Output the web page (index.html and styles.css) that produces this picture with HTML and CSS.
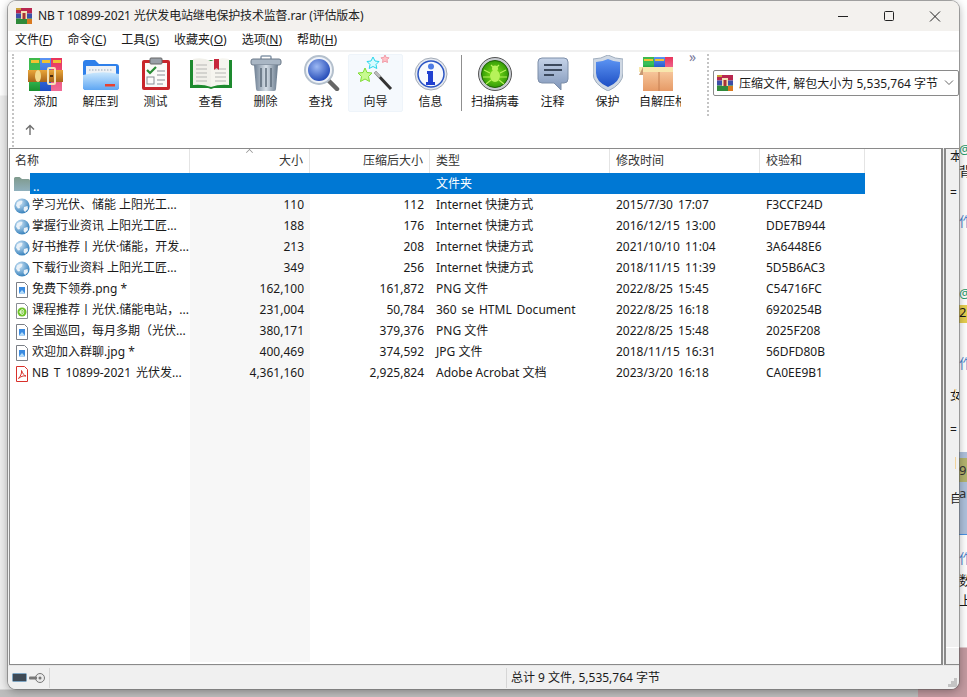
FILE: index.html
```html
<!DOCTYPE html>
<html lang="zh">
<head>
<meta charset="utf-8">
<title>WinRAR</title>
<link rel="stylesheet" href="styles.css">
</head>
<body>
<svg class="defs" width="0" height="0">
  <defs>
    <linearGradient id="gGreen" x1="0" x2="0" y1="0" y2="1"><stop offset="0" stop-color="#3fb84a"/><stop offset=".6" stop-color="#37c05a"/><stop offset="1" stop-color="#1b8f2e"/></linearGradient>
    <linearGradient id="gBlue" x1="0" x2="0" y1="0" y2="1"><stop offset="0" stop-color="#5b93f2"/><stop offset="1" stop-color="#1e4fc4"/></linearGradient>
    <linearGradient id="gRed" x1="0" x2="0" y1="0" y2="1"><stop offset="0" stop-color="#e8345a"/><stop offset="1" stop-color="#f06a96"/></linearGradient>
    <linearGradient id="gBelt" x1="0" x2="0" y1="0" y2="1"><stop offset="0" stop-color="#e9a63a"/><stop offset="1" stop-color="#a8641a"/></linearGradient>
    <linearGradient id="gFolder" x1="0" x2="0" y1="0" y2="1"><stop offset="0" stop-color="#cbe8fd"/><stop offset="1" stop-color="#5ea6f3"/></linearGradient>
    <linearGradient id="gUp" x1="0" x2="0" y1="0" y2="1"><stop offset="0" stop-color="#7f9a8c"/><stop offset="1" stop-color="#8fb0bd"/></linearGradient>
    <linearGradient id="gCan" x1="0" x2="1" y1="0" y2="0"><stop offset="0" stop-color="#6e7f92"/><stop offset=".5" stop-color="#d6dfe8"/><stop offset="1" stop-color="#67788a"/></linearGradient>
    <radialGradient id="gLens" cx=".4" cy=".35" r=".7"><stop offset="0" stop-color="#9db9f4"/><stop offset="1" stop-color="#1f46b4"/></radialGradient>
    <radialGradient id="gBug" cx=".5" cy=".5" r=".55"><stop offset="0" stop-color="#86e61c"/><stop offset="1" stop-color="#2a9405"/></radialGradient>
    <linearGradient id="gNote" x1="0" x2="0" y1="0" y2="1"><stop offset="0" stop-color="#c5d3e8"/><stop offset="1" stop-color="#7f95b8"/></linearGradient>
    <linearGradient id="gBox" x1="0" x2="0" y1="0" y2="1"><stop offset="0" stop-color="#f6c59a"/><stop offset="1" stop-color="#e69a66"/></linearGradient>
    <radialGradient id="gGlobe" cx=".35" cy=".3" r=".8"><stop offset="0" stop-color="#cfe6f7"/><stop offset="1" stop-color="#2374b4"/></radialGradient>
    <symbol id="rar" viewBox="0 0 16 16">
      <rect x="0" y="0" width="16" height="5.500" fill="#b8274f"/><rect x="0" y="5.500" width="16" height="5" fill="#3d4fa8"/><rect x="0" y="10.500" width="16" height="5.500" fill="#2f8a3a"/>
      <rect x="0" y="0" width="5" height="2" fill="#c9a23a"/><path d="M5 5.500h6M5 10.500h6" stroke="#c8b060"/><rect x="5" y="3" width="6" height="8" fill="#f3e2b4"/><rect x="6.500" y="5" width="3" height="6" fill="#a33"/><rect x="11" y="11" width="5" height="5" fill="#d97a20"/>
    </symbol>
    <symbol id="globe" viewBox="0 0 16 16">
      <circle cx="8" cy="8" r="7.600" fill="url(#gGlobe)"/>
      <path d="M3 4.500c2-1.500 4-2 5.500-1.500l-.5 2.500-2.500 2 .5 2.500-2 .5-2-3zM10 9l3.500-1 .5 3-3 3-1.500-2z" fill="#e9f1f8"/>
    </symbol>
    <symbol id="imgfile" viewBox="0 0 16 16">
      <path d="M2.500.5h8l3 3v12h-11z" fill="#fff" stroke="#7b7f86"/>
      <rect x="5" y="5" width="6" height="6.500" fill="#3b8be0"/><path d="M5 11.500l3-3.500 3 3.500z" fill="#b4dcf8"/>
    </symbol>
  </defs>
</svg>
<div class="desktop">
  <div class="behind">
    <span class="frag f1">@ 2</span><span class="frag f2">背</span><span class="frag f3">作</span><span class="frag f4">@ 2</span>
    <span class="frag f5">23</span><span class="frag f6">作</span>
    <div class="hl"></div>
    <span class="frag f7">9</span><span class="frag f11">an</span><span class="frag f8">作</span><span class="frag f9">数</span><span class="frag f10">上</span>
  </div>
  <div class="window">
    <header class="titlebar">
      <svg class="apprar" width="16" height="16"><use href="#rar"/></svg>
      <span class="title">NB T 10899-2021 光伏发电站继电保护技术监督.rar (评估版本)</span>
      <div class="caption">
        <svg width="46" height="30" viewBox="0 0 46 30"><path d="M18 15.500h10" stroke="#222" fill="none"/></svg>
        <svg width="46" height="30" viewBox="0 0 46 30"><rect x="18.500" y="10.500" width="9" height="9" rx="1" stroke="#222" fill="none"/></svg>
        <svg width="46" height="30" viewBox="0 0 46 30"><path d="M18 10.500l10 10M28 10.500l-10 10" stroke="#222" fill="none"/></svg>
      </div>
    </header>
    <nav class="menu">
      <span>文件(<u>F</u>)</span><span>命令(<u>C</u>)</span><span>工具(<u>S</u>)</span><span>收藏夹(<u>O</u>)</span><span>选项(<u>N</u>)</span><span>帮助(<u>H</u>)</span>
    </nav>
    <section class="toolbar">
      <div class="grip"></div>
      <div class="tools-wrap">
        <div class="tools">
          <div class="tool">
            <svg width="36" height="34" viewBox="0 0 36 34"><rect x="1" y="1" width="11" height="33" fill="url(#gGreen)"/><rect x="12" y="1" width="11" height="33" fill="url(#gBlue)"/><rect x="23" y="1" width="11" height="33" fill="url(#gRed)"/><rect x="3" y="3" width="8" height="3" fill="#f1c232"/><rect x="14" y="3" width="8" height="3" fill="#f1c232"/><rect x="25" y="3" width="8" height="3" fill="#f1c232"/><rect x="0" y="13" width="35" height="12" fill="url(#gBelt)"/><ellipse cx="10" cy="19" rx="3" ry="6" fill="#f2d98c"/><rect x="20" y="11" width="7" height="16" rx="1" fill="none" stroke="#f4e3b9" stroke-width="2"/><rect x="22" y="18" width="3" height="2" fill="#4a2b10"/></svg>
            <span>添加</span>
          </div>
          <div class="tool">
            <svg width="38" height="34" viewBox="0 0 38 34"><path d="M1 6a3 3 0 0 1 3-3h9l4 4h17a3 3 0 0 1 3 3v20a3 3 0 0 1-3 3H4a3 3 0 0 1-3-3z" fill="#2f80ea"/><rect x="4" y="9" width="30" height="14" fill="#eef2f6"/><path d="M7 13h24" stroke="#9aa8b6" stroke-dasharray="1.500 1.500"/><path d="M1 18q18-5 36-1v13a3 3 0 0 1-3 3H4a3 3 0 0 1-3-3z" fill="url(#gFolder)"/><rect x="23" y="27" width="10" height="2.500" fill="#e8412f"/></svg>
            <span>解压到</span>
          </div>
          <div class="tool">
            <svg width="30" height="34" viewBox="0 0 30 34"><rect x="1" y="3" width="28" height="30" rx="2" fill="#c9262b"/><rect x="4" y="6" width="22" height="24" fill="#fbfbf8"/><rect x="9" y="1" width="12" height="6" rx="1" fill="#9aa0a8" stroke="#666"/><path d="M6 13l3 3 6-6" stroke="#2a8c34" stroke-width="2.200" fill="none"/><path d="M16 14h8M16 18h8M16 23h8M16 27h6" stroke="#8a8f96"/><rect x="6" y="20" width="7" height="7" fill="none" stroke="#8a8f96"/></svg>
            <span>测试</span>
          </div>
          <div class="tool">
            <svg width="42" height="34" viewBox="0 0 42 34"><path d="M0 3h42v28H24l-3 1-3-1H0z" fill="#1d8a2f"/><path d="M3 2q10-2 18 2v26q-8-3-18-2z" fill="#f1f0ea"/><path d="M39 2q-10-2-18 2v26q8-3 18-2z" fill="#f6f5ef"/><path d="M6 8h11M6 12h11M6 16h11M6 20h11M6 24h11M25 12h11M25 16h11M25 20h11M25 24h11" stroke="#b6b7b4"/><path d="M24 2h5v11l-2.500-2-2.500 2z" fill="#c7283c"/></svg>
            <span>查看</span>
          </div>
          <div class="tool">
            <svg width="32" height="36" viewBox="0 0 32 36"><rect x="11" y="1" width="10" height="4" rx="1" fill="none" stroke="#8899aa" stroke-width="1.500"/><rect x="1" y="4" width="30" height="6" rx="2" fill="#a9b6c4" stroke="#6a7888"/><path d="M4 10h24l-2 24a2 2 0 0 1-2 2H8a2 2 0 0 1-2-2z" fill="url(#gCan)"/><path d="M11 13v19M16 13v19M21 13v19" stroke="#5d6b7a" stroke-width="1.500"/></svg>
            <span>删除</span>
          </div>
          <div class="tool">
            <svg width="38" height="36" viewBox="0 0 38 36"><path d="M26 25l9 9" stroke="#666" stroke-width="4.500" stroke-linecap="round"/><circle cx="17" cy="15" r="14" fill="#eef2f8" stroke="#b4c0cd" stroke-width="2"/><circle cx="17" cy="15" r="11" fill="url(#gLens)"/></svg>
            <span>查找</span>
          </div>
          <div class="tool hot">
            <svg width="38" height="36" viewBox="0 0 38 36"><path d="M18 17l16 17" stroke="#333" stroke-width="3"/><path d="M18 17l5 5" stroke="#bbb" stroke-width="3"/><path d="M16 2l2 4 4 .5-3 3 .8 4-3.800-2-3.800 2 .8-4-3-3 4-.5z" fill="#d8fbff" stroke="#27d6ea"/><path d="M28 0l1.200 2.500 2.800.3-2 2 .5 2.700-2.500-1.300-2.500 1.300.5-2.700-2-2 2.800-.3z" fill="#ffc2c8" stroke="#f09aa6"/><path d="M8 13l2 4.500 5 .5-3.500 3.500 1 5-4.500-2.500-4.500 2.500 1-5L1 18l5-.5z" fill="#c8fa90" stroke="#7fdc33"/></svg>
            <span>向导</span>
          </div>
          <div class="tool">
            <svg width="34" height="34" viewBox="0 0 34 34"><circle cx="17" cy="17" r="16" fill="#e4e8ef" stroke="#a4acb8"/><circle cx="17" cy="17" r="13" fill="#f7f9fd" stroke="#2b55c4" stroke-width="1.500"/><circle cx="17" cy="9.500" r="3" fill="#4d7be4"/><path d="M13 14h6v11h2v3h-9v-3h2v-8h-1z" fill="#1f3fd0"/></svg>
            <span>信息</span>
          </div>
          <div class="tsep"></div>
          <div class="tool wide">
            <svg width="34" height="34" viewBox="0 0 34 34"><circle cx="17" cy="17" r="16.500" fill="#c9cdd2" stroke="#555"/><circle cx="17" cy="17" r="13.500" fill="url(#gBug)" stroke="#1f5f06"/><ellipse cx="17" cy="19" rx="5" ry="6" fill="#b7f25a"/><circle cx="17" cy="11.500" r="3" fill="#b7f25a"/><path d="M6 13l6 3M28 13l-6 3M5 20h7M29 20h-7M8 27l5-4M26 27l-5-4M13 8l2 2M21 8l-2 2" stroke="#b7f25a" stroke-width="1.200"/></svg>
            <span>扫描病毒</span>
          </div>
          <div class="tool">
            <svg width="32" height="34" viewBox="0 0 32 34"><path d="M5 1h22a4 4 0 0 1 4 4v17a4 4 0 0 1-4 4h-3v7l-7-7H5a4 4 0 0 1-4-4V5a4 4 0 0 1 4-4z" fill="url(#gNote)" stroke="#7d8ea8"/><path d="M7 8h18M7 13h18M7 18h10" stroke="#3d4a5e" stroke-width="2"/></svg>
            <span>注释</span>
          </div>
          <div class="tool">
            <svg width="30" height="36" viewBox="0 0 30 36"><path d="M15 0q7 4 15 4v14q0 11-15 18Q0 29 0 18V4q8 0 15-4z" fill="#cfd8e4" stroke="#9eacbc"/><path d="M15 4q6 3 12 3v11q0 9-12 14Q3 27 3 18V7q6 0 12-3z" fill="url(#gBlue)"/></svg>
            <span>保护</span>
          </div>
          <div class="tool clip">
            <svg width="34" height="34" viewBox="0 0 34 34"><rect x="4" y="0" width="11" height="12" fill="url(#gGreen)"/><rect x="15" y="0" width="11" height="12" fill="url(#gBlue)"/><rect x="26" y="0" width="8" height="12" fill="url(#gRed)"/><rect x="5" y="2" width="9" height="2" fill="#f1c232"/><rect x="16" y="2" width="9" height="2" fill="#f1c232"/><rect x="0" y="10" width="34" height="5" fill="#f8e7ad"/><path d="M4 10L0 18h4z" fill="#c99a72"/><rect x="4" y="15" width="30" height="19" fill="url(#gBox)"/><path d="M20 15v19" stroke="#c47f52"/></svg>
            <span>自解压格式</span>
          </div>
        </div>
        <div class="uprow"><svg width="12" height="12" viewBox="0 0 12 12"><path d="M6 11V2M2 5.500L6 1.500l4 4" stroke="#6f6f6f" stroke-width="1.400" fill="none"/></svg></div>
      </div>
      <div class="more">&#187;</div>
      <div class="grip grip2"></div>
      <div class="combo">
        <svg width="16" height="16"><use href="#rar"/></svg>
        <span class="combo-text">压缩文件, 解包大小为 5,535,764 字节</span>
        <svg class="chev" width="10" height="6" viewBox="0 0 10 6"><path d="M1 .5l4 4 4-4" stroke="#666" fill="none"/></svg>
      </div>
    </section>
    <main class="body">
      <div class="list">
        <div class="size-band"></div>
        <div class="row head">
          <div class="c name">名称</div><div class="c size r">大小<i class="sort"></i></div><div class="c packed r">压缩后大小</div><div class="c type">类型</div><div class="c date">修改时间</div><div class="c crc">校验和</div>
        </div>
        <div class="row up">
          <div class="c name"><svg class="ico" width="16" height="14" viewBox="0 0 16 14"><path d="M0 1.500A1.500 1.500 0 0 1 1.500 0h4L8 2h6.500A1.500 1.500 0 0 1 16 3.500V14H0z" fill="url(#gUp)"/></svg><span class="sel">..</span></div><div class="c size r sel-c"></div><div class="c packed r sel-c"></div><div class="c type sel-c">文件夹</div><div class="c date sel-c"></div><div class="c crc sel-c"></div>
        </div>
        <div class="row"><div class="c name"><svg class="ico" width="16" height="16"><use href="#globe"/></svg><span>学习光伏、储能 上阳光工...</span></div><div class="c size r">110</div><div class="c packed r">112</div><div class="c type">Internet 快捷方式</div><div class="c date">2015/7/30 17:07</div><div class="c crc">F3CCF24D</div></div>
        <div class="row"><div class="c name"><svg class="ico" width="16" height="16"><use href="#globe"/></svg><span>掌握行业资讯 上阳光工匠...</span></div><div class="c size r">188</div><div class="c packed r">176</div><div class="c type">Internet 快捷方式</div><div class="c date">2016/12/15 13:00</div><div class="c crc">DDE7B944</div></div>
        <div class="row"><div class="c name"><svg class="ico" width="16" height="16"><use href="#globe"/></svg><span>好书推荐丨光伏·储能，开发...</span></div><div class="c size r">213</div><div class="c packed r">208</div><div class="c type">Internet 快捷方式</div><div class="c date">2021/10/10 11:04</div><div class="c crc">3A6448E6</div></div>
        <div class="row"><div class="c name"><svg class="ico" width="16" height="16"><use href="#globe"/></svg><span>下载行业资料 上阳光工匠...</span></div><div class="c size r">349</div><div class="c packed r">256</div><div class="c type">Internet 快捷方式</div><div class="c date">2018/11/15 11:39</div><div class="c crc">5D5B6AC3</div></div>
        <div class="row"><div class="c name"><svg class="ico" width="16" height="16"><use href="#imgfile"/></svg><span>免费下领券.png *</span></div><div class="c size r">162,100</div><div class="c packed r">161,872</div><div class="c type">PNG 文件</div><div class="c date">2022/8/25 15:45</div><div class="c crc">C54716FC</div></div>
        <div class="row"><div class="c name"><svg class="ico" width="16" height="16" viewBox="0 0 16 16"><path d="M2.500.5h8l3 3v12h-11z" fill="#fff" stroke="#8a8e94"/><circle cx="8" cy="9" r="4.500" fill="#6fc32a"/><path d="M5.800 9h4.400M9.800 7.500A2.200 2.200 0 1 0 9.800 10.500" stroke="#fff" fill="none"/></svg><span>课程推荐丨光伏.储能电站，...</span></div><div class="c size r">231,004</div><div class="c packed r">50,784</div><div class="c type sp">360 se HTML Document</div><div class="c date">2022/8/25 16:18</div><div class="c crc">6920254B</div></div>
        <div class="row"><div class="c name"><svg class="ico" width="16" height="16"><use href="#imgfile"/></svg><span>全国巡回，每月多期（光伏...</span></div><div class="c size r">380,171</div><div class="c packed r">379,376</div><div class="c type">PNG 文件</div><div class="c date">2022/8/25 15:48</div><div class="c crc">2025F208</div></div>
        <div class="row"><div class="c name"><svg class="ico" width="16" height="16"><use href="#imgfile"/></svg><span>欢迎加入群聊.jpg *</span></div><div class="c size r">400,469</div><div class="c packed r">374,592</div><div class="c type">JPG 文件</div><div class="c date">2018/11/15 16:31</div><div class="c crc">56DFD80B</div></div>
        <div class="row"><div class="c name sp"><svg class="ico" width="16" height="16" viewBox="0 0 16 16"><path d="M2.500.5h8l3 3v12h-11z" fill="#fff" stroke="#d8302a"/><path d="M4.500 12.500C7 10 8 6 7.500 4.500 9 8 10 9.500 12 10c-3-.5-5 .5-7.500 2.500z" fill="none" stroke="#d8302a"/></svg><span>NB T 10899-2021 光伏发...</span></div><div class="c size r">4,361,160</div><div class="c packed r">2,925,824</div><div class="c type">Adobe Acrobat 文档</div><div class="c date">2023/3/20 16:18</div><div class="c crc">CA0EE9B1</div></div>
      </div>
      <aside class="side">
        <div class="side-in">
          <span class="st s1">本</span><span class="st s2">=</span><span class="st s3">女</span><span class="st s4">=</span><span class="st s5">自</span>
          <i class="tick t1"></i><i class="tick t2"></i><i class="side-line"></i>
        </div>
      </aside>
    </main>
    <footer class="status">
      <div class="st-ico">
        <svg width="15" height="9" viewBox="0 0 15 9"><rect x=".5" y=".5" width="14" height="8" rx="1" fill="#3f4a55" stroke="#7fa6c4"/></svg>
        <svg width="16" height="10" viewBox="0 0 16 10"><circle cx="11" cy="5" r="4.500" fill="#e9e9e9" stroke="#777"/><circle cx="11" cy="5" r="1.500" fill="#777"/><rect x="0" y="3.500" width="8" height="3" rx="1" fill="#777"/></svg>
      </div>
      <div class="st-gap"></div>
      <div class="st-text">总计 9 文件, 5,535,764 字节</div>
      <svg class="resize" width="9" height="9" viewBox="0 0 9 9"><path d="M6 0h3v3H6zM3 3h3v3H3zM6 3h3v3H6zM0 6h3v3H0zM3 6h3v3H3zM6 6h3v3H6z" fill="#c4c4c4"/></svg>
    </footer>
  </div>
</div>
</body>
</html>
```
FILE: styles.css
```css
* { box-sizing: border-box; }
html, body { margin: 0; padding: 0; }
body { width: 967px; height: 697px; overflow: hidden; font: 12px/1.2 "Noto Sans", "Noto Sans CJK SC", sans-serif; color: #1a1a1a; }
.defs { position: absolute; }
.desktop { position: relative; width: 967px; height: 697px; overflow: hidden; background: linear-gradient(#fff 0, #fff 95px, #ededed 96px, #ededed 689px, #bdbdbd 690px); }
.behind { position: absolute; left: 918px; top: 0; width: 49px; height: 697px; background: linear-gradient(#fff 0, #fff 647px, #c39aa0 648px); font-size: 13px; }
.frag { position: absolute; left: 41px; white-space: nowrap; line-height: 15px; }
.f1 { top: 142px; color: #2a9d6e; } .f2 { top: 164px; } .f3 { top: 214px; color: #4f86d0; } .f4 { top: 286px; color: #2a9d6e; }
.f5 { top: 305px; background: #e6cf4f; width: 8px; height: 18px; overflow: hidden; } .f6 { top: 356px; color: #4f86d0; }
.f7 { top: 458px; color: #333; background: #b4b46e; width: 8px; height: 24px; line-height: 24px; overflow: hidden; } .f11 { top: 486px; color: #333; } .f8 { top: 551px; color: #4f86d0; } .f9 { top: 573px; } .f10 { top: 593px; }
.hl { position: absolute; left: 41px; top: 452px; width: 8px; height: 83px; background: #aec1dc; border-bottom: 1px solid #4a90e2; }
.window { position: absolute; left: 8px; top: 1px; width: 951px; height: 688px; background: #f0f0f0; border-radius: 8px; box-shadow: 0 0 0 1px rgba(90,90,90,.5), 0 2px 10px rgba(0,0,0,.35); overflow: hidden; display: flex; flex-direction: column; }
.titlebar { flex: none; height: 30px; background: #f3f1ee; display: flex; align-items: center; padding-left: 8px; }
.apprar { flex: none; margin-right: 6px; }
.title { flex: 1; white-space: nowrap; color: #222; letter-spacing: -.18px; }
.caption { display: flex; padding-right: 1px; }
.caption svg { display: block; }
.menu { flex: none; height: 19px; background: #fff; display: flex; gap: 15px; padding-left: 7px; align-items: center; }
.menu span { white-space: nowrap; }
.toolbar { flex: none; height: 98px; background: #fff; border-top: 2px solid #f0f0f0; display: flex; position: relative; padding-top: 2px; }
.grip { flex: none; width: 2px; height: 93px; margin-left: 4px; border-left: 2px dotted #c4c4c4; }
.tools-wrap { flex: none; width: 663px; margin-left: 4px; overflow: hidden; }
.tools { display: flex; height: 58px; align-items: flex-start; }
.tool { flex: none; width: 55px; height: 58px; padding-top: 2px; display: flex; flex-direction: column; align-items: center; justify-content: flex-end; border: 1px solid transparent; border-radius: 2px; padding-bottom: 2px; }
.tool svg { flex: none; margin-bottom: 3px; }
.tool span { white-space: nowrap; line-height: 15px; color: #1a1a1a; }
.tool.hot { background: #f5f9fd; border-color: #eef4fa; }
.tool.wide { width: 60px; }
.tool.clip { overflow: hidden; align-items: flex-start; padding-left: 3px; }
.tsep { flex: none; width: 1px; height: 56px; background: #8f8f8f; margin: 1px 3px 0 3px; }
.uprow { padding: 12px 0 0 6px; }
.uprow svg { display: block; }
.more { flex: none; width: 11px; margin: -4px 0 0 8px; color: #7b7b9a; font-size: 14px; line-height: 14px; }
.grip2 { margin-left: 7px; height: 62px; }
.combo { position: absolute; left: 705px; top: 18px; width: 246px; height: 26px; border: 1px solid #8a8a8a; border-radius: 2px; background: #fff; display: flex; align-items: center; padding-left: 3px; }
.combo-text { margin-left: 6px; padding-top: 3px; flex: 1; white-space: nowrap; }
.chev { margin-right: 4px; }
.body { flex: 1; min-height: 0; display: flex; background: #f0f0f0; }
.list { position: relative; flex: none; width: 934px; margin-left: 1px; background: #fff; border: 1px solid #8a8a8a; border-right-width: 2px; overflow: hidden; }
.size-band { position: absolute; left: 180px; top: 23px; bottom: 2px; width: 120px; background: #f7f7f7; }
.row { position: relative; display: flex; height: 21px; align-items: center; white-space: nowrap; }
.row.head { height: 24px; color: #333; background: #fff; }
.c { flex: none; padding: 2px 6px 0; height: 100%; display: flex; align-items: center; overflow: hidden; }
.head .c { padding-top: 0; border-right: 1px solid #e4e4e4; position: relative; }
.c.r { justify-content: flex-end; }
.name { width: 180px; padding-left: 4px; padding-right: 0; }
.head .name { padding-left: 5px; }
.size, .packed { width: 120px; }
.type { width: 180px; }
.date { width: 150px; word-spacing: 2px; }
.crc { width: 105px; }
.sp { word-spacing: 1.800px; }
.ico { flex: none; margin-right: 2px; }
.sort { position: absolute; left: 56px; top: 0; width: 7px; height: 7px; border-left: 1px solid #888; border-top: 1px solid #888; transform: rotate(45deg) scale(.7); }
.row.up .name { padding-top: 0; }
.row.up .sel { flex: 1; height: 100%; background: #0078d4; color: #fff; margin-left: -2px; display: flex; align-items: flex-end; padding-left: 3px; }
.sel-c { background: #0078d4; color: #fff; }
.side { flex: 1; position: relative; margin-left: 1px; border: 1px solid #8a8a8a; border-right: 0; border-left-width: 2px; }
.side-in { position: absolute; inset: 0; overflow: hidden; }
.st { position: absolute; left: 4px; width: 9px; overflow: hidden; line-height: 14px; }
.s1 { top: 1px; } .s2 { top: 37px; } .s3 { top: 240px; } .s4 { top: 274px; } .s5 { top: 343px; }
.tick { position: absolute; left: 9px; width: 1px; height: 12px; background: #f3d49c; }
.t1 { top: 240px; } .t2 { top: 308px; }
.side-line { position: absolute; left: 0; right: 0; bottom: 16px; height: 1px; background: #fff; }
.status { flex: none; height: 24px; display: flex; border-top: 1px solid #e6e6e6; background: #f0f0f0; align-items: center; position: relative; }
.st-ico { width: 42px; display: flex; gap: 2px; padding-left: 4px; align-items: center; border-right: 1px solid #d6d6d6; height: 20px; }
.st-gap { width: 457px; border-right: 1px solid #d6d6d6; height: 20px; }
.st-text { padding: 2px 0 0 4px; white-space: nowrap; }
.resize { position: absolute; right: 2px; bottom: 2px; }
```
